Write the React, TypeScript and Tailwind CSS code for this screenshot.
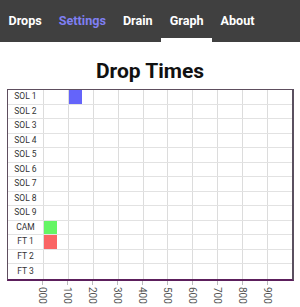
import React from "react";

const tabs = [
  { name: "Drops", color: "text-white" },
  { name: "Settings", color: "text-[#7f7ff2]" },
  { name: "Drain", color: "text-white" },
  { name: "Graph", color: "text-white", active: true },
  { name: "About", color: "text-white" },
];

const rows = ["SOL 1", "SOL 2", "SOL 3", "SOL 4", "SOL 5", "SOL 6", "SOL 7", "SOL 8", "SOL 9", "CAM", "FT 1", "FT 2", "FT 3"];
const ticks = ["000", "100", "200", "300", "400", "500", "600", "700", "800", "900"];

// bars: row -> [column, colour]
const bars: Record<string, [number, string]> = {
  "SOL 1": [1, "bg-[#6464fa]"],
  CAM: [0, "bg-[#64f564]"],
  "FT 1": [0, "bg-[#fa6464]"],
};

export default function App() {
  return (
    <div className="w-[300px] h-[307px] bg-white overflow-hidden font-['Roboto',sans-serif]">
      <nav className="h-[42px] bg-[#404040] flex items-end">
        {tabs.map((t) => (
          <div
            key={t.name}
            className={`h-[42px] px-[8.5px] flex items-center text-[12.6px] font-bold ${t.color} ${
              t.active ? "border-b-[4px] border-white pt-[4px]" : ""
            }`}
          >
            {t.name}
          </div>
        ))}
      </nav>
      <h1 className="text-center text-[21px] font-bold text-[#111] leading-none mt-[19px] mb-[7px]">Drop Times</h1>
      <div className="ml-[7px] w-[287px] border-l border-t border-[#5e4e5e] border-r-2 border-r-[#5a5060] border-b-2 border-b-[#5c1f5c]">
        {rows.map((r, i) => (
          <div
            key={r}
            className={`flex h-[14.5px] ${i < rows.length - 1 ? "border-b border-[#e2e2e2]" : ""}`}
          >
            <div className="w-[35px] flex items-center justify-center text-[8.5px] text-[#333]">
              {r}
            </div>
            {ticks.map((_, c) => (
              <div key={c} className="w-[25px] border-l border-[#dcdcdc] flex">
                {bars[r] && bars[r][0] === c && <div className={`w-[13px] h-full ${bars[r][1]}`} />}
              </div>
            ))}
          </div>
        ))}
      </div>
      <div className="flex ml-[42px]">
        {ticks.map((t) => (
          <div key={t} className="w-[25px] flex flex-col items-start">
            <div className="w-px h-[4px] bg-[#bbb]" />
            <div className="-ml-[5px] mt-[2px] [writing-mode:vertical-rl] text-[10px] leading-[11px] text-[#555]">
              {t}
            </div>
          </div>
        ))}
      </div>
    </div>
  );
}
